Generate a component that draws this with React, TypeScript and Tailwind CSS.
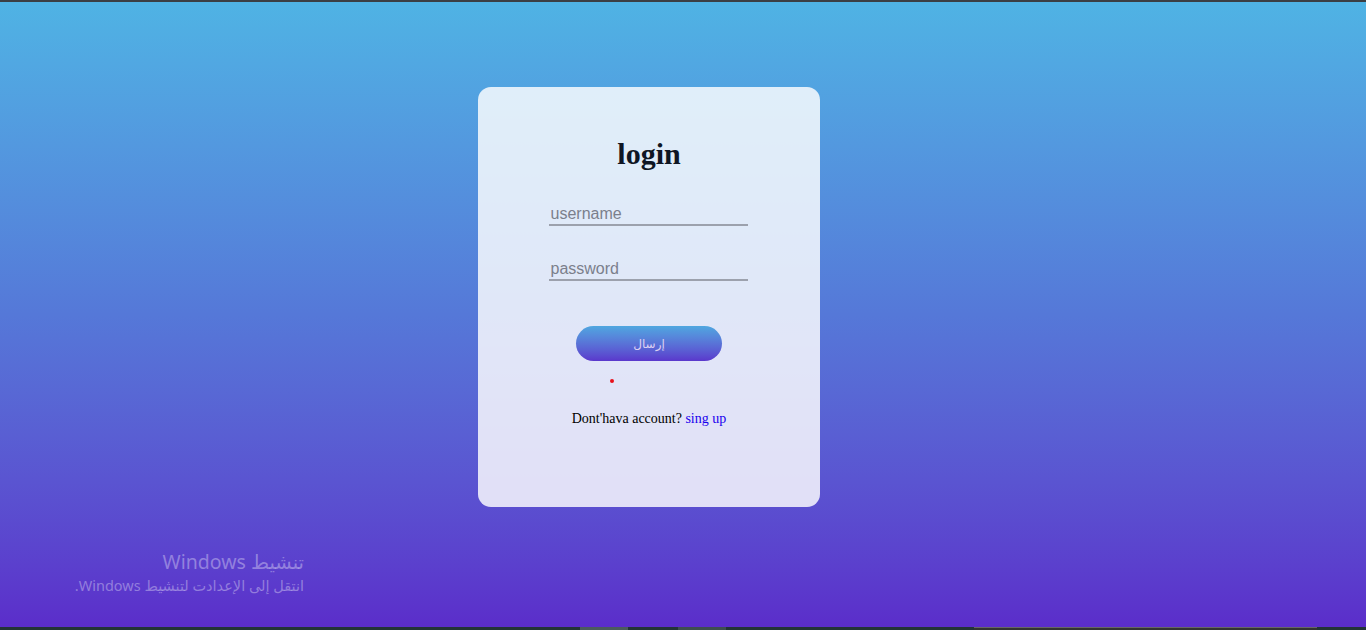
import React from 'react';

const App = () => {
  return (
    <div className="relative w-[1366px] h-[630px] overflow-hidden flex flex-col bg-[#2a3a3d]">
      <div className="h-[2px] bg-[#3b3f44]" />

      {/* page */}
      <div className="relative flex-1 bg-gradient-to-b from-[#4fb3e4] via-[#5578d8] to-[#5b2dca]">
        <div className="ml-[478px] mt-[85px] w-[342px] h-[420px] rounded-[13px] bg-white/[0.82] flex flex-col items-center">
          <h1
            className="mt-[52px] text-[30px] font-bold leading-none text-[#0f1624]"
            style={{ fontFamily: '"Liberation Serif", serif' }}
          >
            login
          </h1>

          <form className="mt-[35px] flex flex-col items-center" onSubmit={(e) => e.preventDefault()}>
            <input
              type="text"
              placeholder="username"
              className="-ml-[2px] w-[199px] h-[22px] px-[2px] bg-transparent border-b-2 border-[#9ca1ad] text-[16px] outline-none placeholder:text-[#7b7f8c]"
              style={{ fontFamily: '"Liberation Sans", Arial, sans-serif' }}
            />
            <input
              type="password"
              placeholder="password"
              className="-ml-[2px] mt-[33px] w-[199px] h-[22px] px-[2px] bg-transparent border-b-2 border-[#9ca1ad] text-[16px] outline-none placeholder:text-[#7b7f8c]"
              style={{ fontFamily: '"Liberation Sans", Arial, sans-serif' }}
            />
            <button
              type="submit"
              className="mt-[45px] w-[146px] h-[35px] rounded-full bg-gradient-to-b from-[#4fa6e0] to-[#5a37cc] text-[12px] text-[#dcd0f2]"
              style={{ fontFamily: '"DejaVu Sans", "Noto Sans", sans-serif' }}
            >
              إرسال
            </button>
          </form>

          <div className="w-full flex">
            <span className="mt-[18px] ml-[132px] w-[4px] h-[4px] rounded-full bg-[#e8101a]" />
          </div>

          <p
            className="mt-[25px] text-[14px] text-black"
            style={{ fontFamily: '"Liberation Serif", serif' }}
          >
            Dont'hava account? <a href="#" className="text-[#1a00ee]">sing up</a>
          </p>
        </div>

        {/* activation watermark */}
        <div
          dir="rtl"
          className="absolute left-[44px] top-[547px] w-[260px] text-right text-white/35"
          style={{ fontFamily: '"Noto Sans", "DejaVu Sans", sans-serif' }}
        >
          <div className="text-[19.5px] leading-[26px]">تنشيط Windows</div>
          <div className="text-[14.5px] leading-[21px]">انتقل إلى الإعدادت لتنشيط Windows.</div>
        </div>
      </div>

      {/* taskbar */}
      <div className="h-[3px] flex bg-[#233437]">
        <div className="w-[580px]" />
        <div className="w-[48px] bg-[#4b5b5d]" />
        <div className="w-[50px]" />
        <div className="w-[48px] bg-[#3e4e50]" />
        <div className="w-[248px]" />
        <div className="w-[343px] bg-[#333] border-t border-[#666]" />
      </div>
    </div>
  );
};

export default App;
